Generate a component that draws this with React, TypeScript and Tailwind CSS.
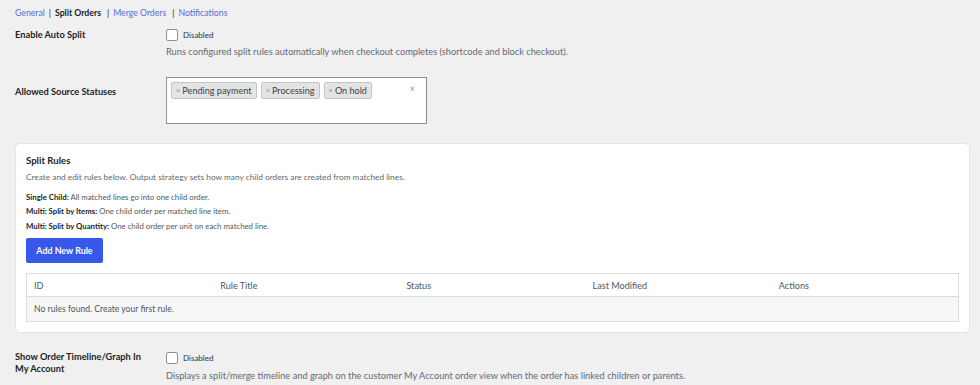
import React from "react";

function Checkbox() {
  return <span className="inline-block w-[12px] h-[12px] rounded-[2px] border border-[#8c8f94] bg-white" />;
}

function Tag({ label }: { label: string }) {
  return (
    <span className="flex items-center h-[17px] px-[4px] rounded-[2px] border border-[#c3c4c7] bg-[#e4e4e4] text-[#3c434a] text-[9.1px] leading-none">
      <span className="text-[#8c8f94] text-[7.5px] mr-[2px]">×</span>
      {label}
    </span>
  );
}

export default function App() {
  const cols = ["ID", "Rule Title", "Status", "Last Modified", "Actions"];
  return (
    <div className="w-[980px] h-[385px] overflow-hidden bg-[#f0f0f1] text-[#1d2327] px-[15px] font-[Lato,sans-serif]">
      <div className="flex items-center h-[25px] text-[8.7px] text-[#5a6ad8]">
        <span>General</span>
        <span className="text-[#1d2327] mx-[4px]">|</span>
        <span className="text-[#1d2327] font-bold">Split Orders</span>
        <span className="text-[#1d2327] ml-[6px] mr-[4px]">|</span>
        <span>Merge Orders</span>
        <span className="text-[#1d2327] ml-[6px] mr-[4px]">|</span>
        <span>Notifications</span>
      </div>

      <div className="flex pt-[4px]">
        <div className="w-[151px] shrink-0 text-[9.25px] font-bold leading-[12px]">Enable Auto Split</div>
        <div>
          <div className="flex items-center gap-[5px] h-[12px]">
            <Checkbox />
            <span className="text-[8px] text-[#2c3338]">Disabled</span>
          </div>
          <div className="text-[9.25px] text-[#646970] mt-[5px] leading-[12px]">Runs configured split rules automatically when checkout completes (shortcode and block checkout).</div>
        </div>
      </div>

      <div className="flex mt-[19px]">
        <div className="w-[151px] shrink-0 text-[9.25px] font-bold pt-[8px]">Allowed Source Statuses</div>
        <div className="relative w-[261px] h-[47px] bg-white border border-[#8c8f94] pl-[4px] pt-[4px]">
          <div className="flex gap-[4px]">
            <Tag label="Pending payment" />
            <Tag label="Processing" />
            <Tag label="On hold" />
          </div>
          <span className="absolute right-[11px] top-[4px] text-[#8c8f94] text-[9px]">×</span>
        </div>
      </div>

      <div className="mt-[19px] w-[955px] bg-white rounded-[5px] border border-[#e4e4e7] px-[10px] pt-[10px] pb-[10px]">
        <div className="text-[9.6px] font-bold">Split Rules</div>
        <div className="text-[8.3px] text-[#646970] mt-[3px]">Create and edit rules below. Output strategy sets how many child orders are created from matched lines.</div>
        <div className="mt-[6px] text-[7.8px] text-[#50575e] leading-[14.5px]">
          <div><b className="text-[#1d2327]">Single Child:</b> All matched lines go into one child order.</div>
          <div><b className="text-[#1d2327]">Multi: Split by Items:</b> One child order per matched line item.</div>
          <div><b className="text-[#1d2327]">Multi: Split by Quantity:</b> One child order per unit on each matched line.</div>
        </div>
        <div className="mt-[5px] inline-flex items-center justify-center w-[77px] h-[25px] bg-[#3858e9] rounded-[2px] text-white text-[8.9px] font-bold">Add New Rule</div>
        <div className="mt-[10px] border border-[#dcdcde] text-[9.1px] text-[#50575e]">
          <div className="grid grid-cols-5 h-[23px] items-center bg-white border-b border-[#dcdcde]">
            {cols.map((c) => (
              <div key={c} className="pl-[7px]">{c}</div>
            ))}
          </div>
          <div className="h-[24px] flex items-center bg-[#f6f7f7] pl-[7px] text-[8.6px]">No rules found. Create your first rule.</div>
        </div>
      </div>

      <div className="flex mt-[18px]">
        <div className="w-[151px] shrink-0 text-[9.25px] font-bold leading-[12px]">Show Order Timeline/Graph In<br />My Account</div>
        <div className="pt-[1px]">
          <div className="flex items-center gap-[5px] h-[12px]">
            <Checkbox />
            <span className="text-[8px] text-[#2c3338]">Disabled</span>
          </div>
          <div className="text-[9.25px] text-[#646970] mt-[6px] leading-[12px]">Displays a split/merge timeline and graph on the customer My Account order view when the order has linked children or parents.</div>
        </div>
      </div>
    </div>
  );
}
